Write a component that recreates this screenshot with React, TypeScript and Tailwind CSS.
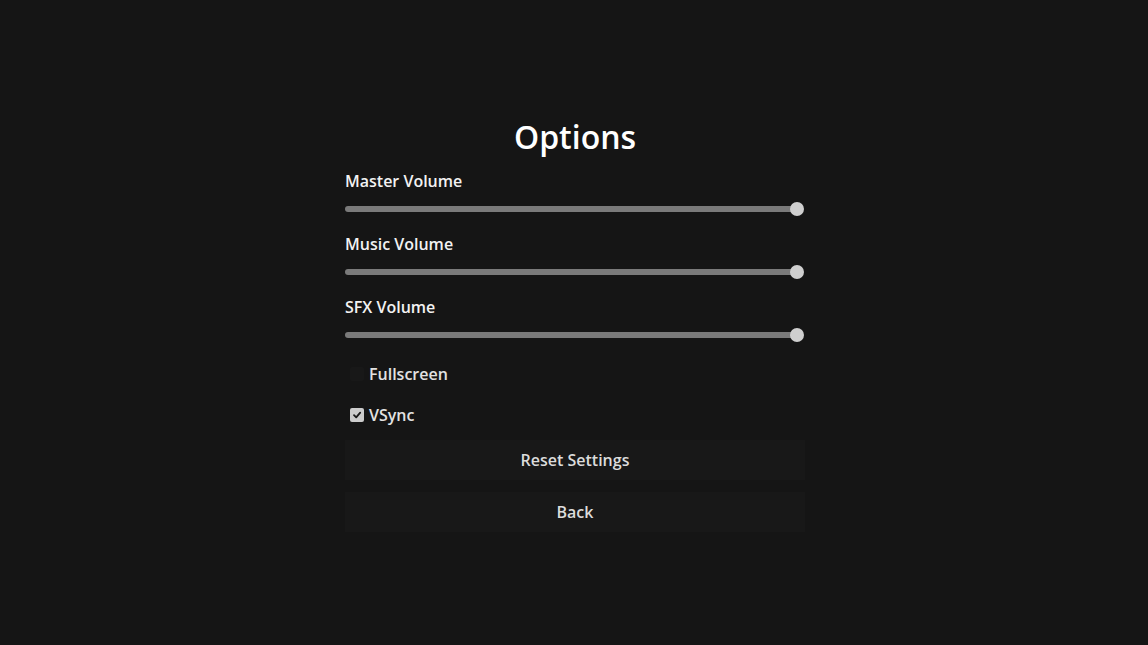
import { useState } from "react";

function VolumeSlider({ label, value }: { label: string; value: number }) {
  return (
    <div className="flex flex-col">
      <div className="text-base leading-6 font-semibold text-[#f2f2f2]">{label}</div>
      <div className="mt-[9px] flex h-[14px] w-[459px] items-center">
        <div className="h-[6px] flex-1 rounded-full bg-[#7a7a7a]" style={{ opacity: value >= 0 ? 1 : 0 }} />
        <div className="-ml-[7px] h-[14px] w-[14px] rounded-full bg-[#cfcfcf]" />
      </div>
    </div>
  );
}

function CheckRow({ label, checked }: { label: string; checked: boolean }) {
  return (
    <div className="flex h-6 items-center pl-[5px]">
      {checked ? (
        <div className="flex h-[14px] w-[14px] items-center justify-center rounded-[2px] bg-[#cccccc]">
          <svg width="10" height="10" viewBox="0 0 10 10" fill="none">
            <path d="M2 5.2 L4.2 7.4 L8.2 2.6" stroke="#1a1a1a" strokeWidth="1.8" strokeLinecap="round" strokeLinejoin="round" />
          </svg>
        </div>
      ) : (
        <div className="h-[14px] w-[14px] rounded-[2px] bg-[#181818]" />
      )}
      <span className="ml-[5px] text-base font-semibold text-[#e2e2e2]">{label}</span>
    </div>
  );
}

export default function App() {
  const [volumes] = useState({ master: 100, music: 100, sfx: 100 });

  return (
    <div className="h-[645px] w-full bg-[#151515] pl-[2px] font-['Open_Sans',sans-serif]">
      <div className="mx-auto flex w-[460px] flex-col pt-[117px]">
        <h1 className="text-center text-[32px] leading-10 font-semibold text-white">Options</h1>
        <div className="mt-3 flex flex-col gap-4">
          <VolumeSlider label="Master Volume" value={volumes.master} />
          <VolumeSlider label="Music Volume" value={volumes.music} />
          <VolumeSlider label="SFX Volume" value={volumes.sfx} />
        </div>
        <div className="mt-5">
          <CheckRow label="Fullscreen" checked={false} />
        </div>
        <div className="mt-[17px]">
          <CheckRow label="VSync" checked={true} />
        </div>
        <button className="mt-[13px] h-10 w-full bg-[#181818] text-base font-semibold text-[#dcdcdc]">
          Reset Settings
        </button>
        <button className="mt-3 h-10 w-full bg-[#181818] text-base font-semibold text-[#dcdcdc]">
          Back
        </button>
      </div>
    </div>
  );
}
